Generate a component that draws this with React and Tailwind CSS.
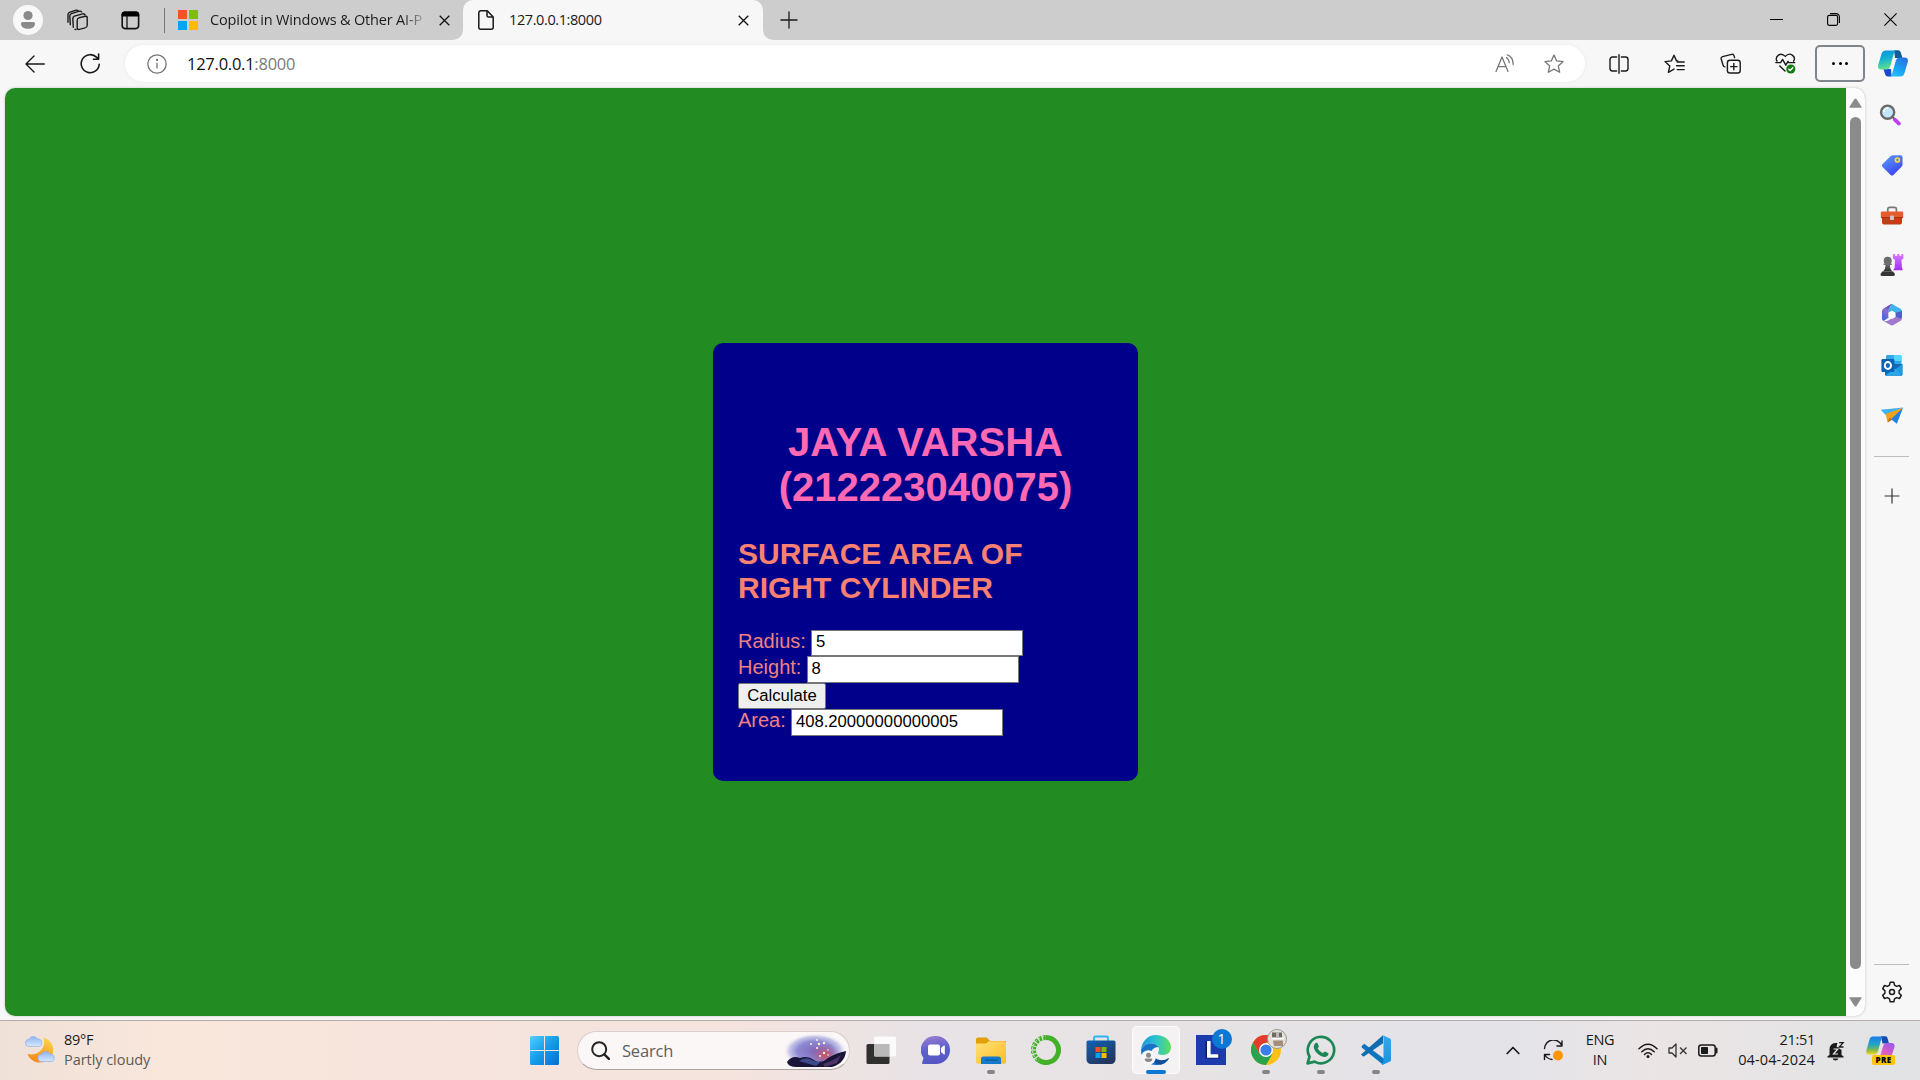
import React from "react";

const UI = "font-['Open_Sans','Noto_Sans',sans-serif]";

function Svg({ w, h, className = "", children, ...rest }) {
  return (
    <svg width={w} height={h} viewBox={`0 0 ${w} ${h}`} fill="none" className={`shrink-0 ${className}`} {...rest}>
      {children}
    </svg>
  );
}

const line = { stroke: "#1a1a1a", strokeWidth: 1.4, strokeLinecap: "round", strokeLinejoin: "round" };

function Defs() {
  return (
    <svg width="0" height="0" className="absolute">
      <defs>
        <linearGradient id="cpA" x1="0" y1="0" x2="0.2" y2="1">
          <stop offset="0" stopColor="#0b8fe0" /><stop offset="0.5" stopColor="#14b3d0" /><stop offset="1" stopColor="#62e08c" />
        </linearGradient>
        <linearGradient id="cpB" x1="0.8" y1="0" x2="0.2" y2="1">
          <stop offset="0" stopColor="#2a6fe0" /><stop offset="0.6" stopColor="#16a5f5" /><stop offset="1" stopColor="#27c3fb" />
        </linearGradient>
        <linearGradient id="ppA" x1="0" y1="0" x2="0" y2="1">
          <stop offset="0" stopColor="#1b7be8" /><stop offset="0.45" stopColor="#21a6c9" /><stop offset="0.75" stopColor="#7fb94c" /><stop offset="1" stopColor="#ffd21c" />
        </linearGradient>
        <linearGradient id="ppB" x1="0.8" y1="0" x2="0.2" y2="1">
          <stop offset="0" stopColor="#9b59e8" /><stop offset="0.5" stopColor="#d85bc9" /><stop offset="1" stopColor="#ff7a6b" />
        </linearGradient>
        <linearGradient id="tag" x1="0" y1="0" x2="0.6" y2="1">
          <stop offset="0" stopColor="#5aa2ff" /><stop offset="1" stopColor="#3d43f0" />
        </linearGradient>
        <linearGradient id="m3a" x1="0.6" y1="0" x2="0.2" y2="1">
          <stop offset="0" stopColor="#4a3fa8" /><stop offset="0.4" stopColor="#8a6fd0" /><stop offset="1" stopColor="#3f63d8" />
        </linearGradient>
        <linearGradient id="rook" x1="0" y1="0" x2="0" y2="1">
          <stop offset="0" stopColor="#d77bff" /><stop offset="1" stopColor="#a32cf5" />
        </linearGradient>
        <linearGradient id="pawn" x1="0" y1="0" x2="0" y2="1">
          <stop offset="0" stopColor="#777" /><stop offset="1" stopColor="#2b2b2b" />
        </linearGradient>
        <linearGradient id="win" x1="0" y1="0" x2="1" y2="1">
          <stop offset="0" stopColor="#4fd0ff" /><stop offset="0.5" stopColor="#159be8" /><stop offset="1" stopColor="#006fd4" />
        </linearGradient>
        <linearGradient id="moon" x1="0.7" y1="0" x2="0.2" y2="1">
          <stop offset="0" stopColor="#fbd24a" /><stop offset="1" stopColor="#f28418" />
        </linearGradient>
        <linearGradient id="cloud" x1="0" y1="0" x2="0" y2="1">
          <stop offset="0" stopColor="#8fb2f2" /><stop offset="1" stopColor="#d6e9fd" />
        </linearGradient>
        <linearGradient id="chat" x1="0.3" y1="0" x2="0.5" y2="1">
          <stop offset="0" stopColor="#9a7bd0" /><stop offset="0.5" stopColor="#5b60cc" /><stop offset="1" stopColor="#5555c4" />
        </linearGradient>
        <linearGradient id="folder" x1="0" y1="0" x2="1" y2="1">
          <stop offset="0" stopColor="#ffe07a" /><stop offset="1" stopColor="#fdbe1e" />
        </linearGradient>
        <linearGradient id="store" x1="0" y1="0" x2="0.6" y2="1">
          <stop offset="0" stopColor="#0f63b4" /><stop offset="1" stopColor="#24365f" />
        </linearGradient>
        <linearGradient id="edgeTop" x1="0" y1="0.5" x2="1" y2="0.5">
          <stop offset="0" stopColor="#1b96dc" /><stop offset="0.5" stopColor="#2cc3d2" /><stop offset="1" stopColor="#5fe05a" />
        </linearGradient>
        <linearGradient id="vs" x1="0" y1="0" x2="0" y2="1">
          <stop offset="0" stopColor="#35a9ee" /><stop offset="1" stopColor="#1c93e0" />
        </linearGradient>
        <radialGradient id="glow" cx="0.5" cy="0.5" r="0.5">
          <stop offset="0" stopColor="#8268b8" /><stop offset="0.55" stopColor="#8c8ad2" /><stop offset="0.8" stopColor="#b9b8e4" stopOpacity="0.8" /><stop offset="1" stopColor="#fbf6f5" stopOpacity="0" />
        </radialGradient>
        <radialGradient id="ember" cx="0.5" cy="0.5" r="0.5">
          <stop offset="0" stopColor="#cf4f62" /><stop offset="1" stopColor="#9a5f9c" stopOpacity="0" />
        </radialGradient>
      </defs>
    </svg>
  );
}

function CloseX({ size = 11, className = "" }) {
  return (
    <Svg w={size} h={size} className={className}>
      <path d={`M.7.7 ${size - 0.7} ${size - 0.7}M${size - 0.7}.7.7 ${size - 0.7}`} stroke="#111" strokeWidth="1.3" />
    </Svg>
  );
}

function TabBar() {
  return (
    <header className={`flex h-10 items-center bg-[#cdcdcd] text-[#1b1b1b] ${UI}`}>
      <Svg w={30} h={30} className="ml-[13px]">
        <circle cx="15" cy="15" r="15" fill="#f8f8f8" />
        <circle cx="15" cy="10.5" r="4.6" fill="#8a8a8a" />
        <path d="M8 18.5a1.6 1.6 0 0 1 1.6-1.6h10.8a1.6 1.6 0 0 1 1.6 1.6c0 3.5-3 5.3-7 5.3s-7-1.8-7-5.3z" fill="#8a8a8a" />
      </Svg>
      <Svg w={22} h={22} className="ml-6" {...line}>
        <rect x="10.2" y="7.8" width="10" height="11.6" rx="2" transform="skewY(-14) translate(0 4)" />
        <path d="M6.3 18.2 5.8 9.6q0-1.8 1.6-2.4l8.3-2.3M3.3 15.6 2.8 7q0-1.8 1.6-2.4l8-2.4q1.5-.4 2.2.8M9 20.5q-.2.1-.9-.2M1 13.2V5.8q0-1.8 1.5-2.4L9 1.2q1.2-.4 2 .6M15.7 4.9q1.7-.4 2.3 1" />
      </Svg>
      <Svg w={19} h={19} className="ml-8">
        <rect x="1.2" y="1.2" width="16.4" height="16.4" rx="3" stroke="#111" strokeWidth="1.6" />
        <path d="M.6 5.4V3.6a3 3 0 0 1 3-3h11.6a3 3 0 0 1 3 3v1.8z" fill="#000" />
        <path d="M6 5v12.5" stroke="#111" strokeWidth="1.3" />
      </Svg>
      <div className="ml-6 h-[25px] w-px bg-[#777]" />
      <div className="ml-[13px] grid h-5 w-5 grid-cols-2 gap-[2px]">
        <i className="bg-[#f35325]" /><i className="bg-[#81bc06]" /><i className="bg-[#05a6f0]" /><i className="bg-[#ffba08]" />
      </div>
      <div className="ml-3 w-[218px] whitespace-nowrap bg-gradient-to-r from-[#1b1b1b] from-88% to-[#cdcdcd] bg-clip-text text-[14.5px] leading-5 tracking-[-0.18px] text-transparent">
        Copilot in Windows &amp; Other AI-P
      </div>
      <CloseX className="ml-[11px] mt-px" />
      <div className="ml-[3px] flex h-10 w-[320px] items-center">
        <Svg w={10} h={40}><path d="M0 40h10V30A10 10 0 0 1 0 40z" fill="#f7f7f7" /></Svg>
        <div className="flex h-10 w-[300px] items-center rounded-t-[10px] bg-[#f7f7f7]">
          <Svg w={16} h={20} className="ml-[15px]" stroke="#1a1a1a" strokeWidth="1.5" strokeLinejoin="round">
            <path d="M3 .8h6.3L15.2 7v10.2a2 2 0 0 1-2 2H2.8a2 2 0 0 1-2-2V2.8a2 2 0 0 1 2-2z" /><path d="M9 1v4.4q0 1.6 1.6 1.6H15" />
          </Svg>
          <span className="ml-[15px] w-[94px] whitespace-nowrap text-[14.5px] leading-5 tracking-[-0.4px]">127.0.0.1:8000</span>
          <CloseX className="ml-[135px] mt-px" />
        </div>
        <Svg w={10} h={40}><path d="M10 40H0V30a10 10 0 0 0 10 10z" fill="#f7f7f7" /></Svg>
      </div>
      <Svg w={18} h={18} className="ml-[7px] mb-px" stroke="#1a1a1a" strokeWidth="1.3"><path d="M9 .5v17M.5 9h17" /></Svg>
      <div className="mb-px ml-auto flex items-center gap-[44px] pr-[23px]">
        <Svg w={13} h={13}><path d="M0 6.5h13" stroke="#000" /></Svg>
        <Svg w={13} h={13} stroke="#000" strokeWidth="1.1">
          <rect x=".6" y="2.4" width="10" height="10" rx="1.6" /><path d="M3 .6h6.2a3.2 3.2 0 0 1 3.2 3.2V10" />
        </Svg>
        <Svg w={13} h={13}><path d="m.4.4 12.2 12.2M12.6.4.4 12.6" stroke="#000" strokeWidth="1.1" /></Svg>
      </div>
    </header>
  );
}

function Toolbar() {
  return (
    <div className={`flex h-[47px] items-center bg-[#f7f7f7] ${UI}`}>
      <Svg w={20} h={18} className="ml-[25px]" {...line}><path d="M19.3 9H1M9 1 1 9l8 8" /></Svg>
      <Svg w={21} h={21} className="ml-[35px]" {...line} strokeWidth="1.6"><path d="M19.2 11.2A9 9 0 1 1 16.7 4.4l1.5 1.6M18.6 1v5.2h-5.2" /></Svg>
      <div className="ml-6 flex h-[37px] w-[1460px] items-center rounded-full bg-white shadow-[0_0_4px_rgba(0,0,0,0.06)]">
        <Svg w={20} h={20} className="ml-[22px]" stroke="#767676" strokeWidth="1.3"><circle cx="10" cy="10" r="9.2" /><path d="M10 8.8v5.6" /><circle cx="10" cy="6" r=".5" fill="#767676" /></Svg>
        <span className="ml-5 whitespace-nowrap text-[16.5px] leading-6 tracking-[-0.25px] text-[#111]">127.0.0.1<span className="text-[#7b7b7b]">:8000</span></span>
        <Svg w={20} h={19} className="ml-auto mr-[29px]" stroke="#767676" strokeWidth="1.3" strokeLinecap="round" strokeLinejoin="round">
          <path d="M1 17.5 7 3l6 14.5M3 12.6h8" /><path d="M11.5 3.6q2.6 1.6 2.8 5M12.4.9q5.7 2 5.8 9.6" />
        </Svg>
        <Svg w={20} h={20} className="mr-[21px]" stroke="#767676" strokeWidth="1.3" strokeLinejoin="round">
          <path d="m10 1 2.7 5.9 6.4.7-4.8 4.3 1.4 6.4L10 15.1l-5.7 3.2 1.4-6.4L.9 7.6l6.4-.7z" />
        </Svg>
      </div>
      <Svg w={20} h={20} className="ml-6" {...line}><path d="M7.6 3H3.4A2.4 2.4 0 0 0 1 5.4v9.2A2.4 2.4 0 0 0 3.4 17h4.2M12.4 3h4.2A2.4 2.4 0 0 1 19 5.4v9.2a2.4 2.4 0 0 1-2.4 2.4h-4.2M10 .8v18.4" /></Svg>
      <Svg w={21} h={20} className="ml-[35px]" {...line}>
        <path d="M13.8 7 12.5 6.9 10 1.2 7.4 6.9 1 7.6l4.8 4.3-1.4 6.4 5.6-3.2M13.2 8h7M12.6 11.8h7.6M13.2 15.6h7" />
      </Svg>
      <Svg w={21} h={21} className="ml-[35px]" {...line}>
        <rect x="7.4" y="7.2" width="12.8" height="12.8" rx="2.6" /><path d="M13.8 10.4v6.4M10.6 13.6H17M14.6 4.6l-.6-2q-.6-1.8-2.4-1.3L2.6 3.6Q.7 4.2 1.2 6l2 6.6q.5 1.4 1.7 1.3" />
      </Svg>
      <Svg w={21} h={21} className="ml-[34px]" {...line}>
        <path d="M2 8.2C-.5 3.6 5.5-1.8 10.3 3.4 15-1.8 21.4 3.6 18.6 8.2M.8 9.6h4.8l2-3.2 3.2 5.8 2.2-3.8.8 1.2h6M4.8 13l5.2 5" />
        <circle cx="15.8" cy="16" r="4.6" fill="#107c10" stroke="none" /><path d="m13.8 16.2 1.4 1.3 2.6-2.7" stroke="#fff" />
      </Svg>
      <div className="ml-[19px] flex h-[37px] w-[50px] items-center justify-center gap-[3.5px] rounded-[5px] border-2 border-[#80858d]">
        <i className="h-[3px] w-[3px] rounded-full bg-black" /><i className="h-[3px] w-[3px] rounded-full bg-black" /><i className="h-[3px] w-[3px] rounded-full bg-black" />
      </div>
      <Svg w={30} h={27} className="ml-[13px]">
        <path d="M16 .3h4.3q1.8 0 2.4 2L24.5 8H17z" fill="#155d95" />
        <path d="M13.6 26.5H9.8q-2 0-2.6-2L5.4 19H13z" fill="#1d48d0" />
        <path d="M7.6.4h11.2q-2.2.4-2.9 2.8L12.3 16q-1 3.6-4.2 3.6H3.6Q-.7 19.6.2 15L3.6 3.6Q4.6.4 7.6.4z" fill="url(#cpA)" />
        <path d="M22.4 26.5H11.2q2.2-.4 2.9-2.8L17.7 11q1-3.6 4.2-3.6h4.5q4.3 0 3.4 4.6l-3.4 11.3q-1 3.2-4 3.2z" fill="url(#cpB)" />
      </Svg>
    </div>
  );
}

function Slot({ children, className = "h-[50px]" }) {
  return <div className={`flex w-full shrink-0 items-center justify-center ${className}`}>{children}</div>;
}

function Sidebar() {
  return (
    <aside className="flex w-[55px] flex-col items-center pr-[2px] pt-[2px]">
      <Slot>
        <Svg w={22} h={22} className="mr-[3px]"><path d="m13.5 13 2.5 2.4" stroke="#555" strokeWidth="2" /><path d="m15.8 15.6 4.2 4" stroke="#c13cf0" strokeWidth="3.6" strokeLinecap="round" /><circle cx="8.6" cy="8.2" r="6.6" fill="#c4e6fb" stroke="#6a6a6a" strokeWidth="2.4" /><path d="M5 8a4 4 0 0 1 4-4" stroke="#fff" strokeWidth="1.4" /></Svg>
      </Slot>
      <Slot>
        <Svg w={22} h={22}><path d="M11.5 1.2h8a2 2 0 0 1 2 2v7.6q0 1-.7 1.7l-8.4 8.4q-1.4 1.3-2.8 0l-8-8q-1.4-1.4 0-2.8L10 1.8q.7-.6 1.5-.6z" fill="url(#tag)" /><circle cx="16.4" cy="6" r="2" fill="#5f7df2" stroke="#f8d83c" strokeWidth="1.7" /></Svg>
      </Slot>
      <Slot className="h-[50px] pt-[2px]">
        <Svg w={24} h={20}><path d="M7.8 6V3.3a2 2 0 0 1 2-2h4.6a2 2 0 0 1 2 2V6" stroke="#777" strokeWidth="1.7" /><path d="M2 9h20v7.4a2 2 0 0 1-2 2H4a2 2 0 0 1-2-2z" fill="#c63c16" /><rect x=".8" y="5.4" width="22.4" height="6.4" rx="1.4" fill="#e75c2c" /><path d="M1 11.6h22" stroke="#a9300f" /><rect x="10" y="9.4" width="4" height="4.6" rx="1" fill="#c9c9c9" /></Svg>
      </Slot>
      <Slot>
        <Svg w={24} h={24}>
          <path d="M13 1h2v1.8h2.200V1h2.200v1.800h2V1h2v4.400l-2 1.600.6 8 1 2.200H13l1.600-2.200.4-8-2-1.600z" fill="url(#rook)" />
          <circle cx="7.700" cy="7.800" r="4" fill="#6b6b6b" />
          <path d="M3.400 11.200q0-.8.800-.8h7q.8 0 .8.800t-.8.800h-1.300q0 4.500 2.900 6.600H2.600q2.900-2.100 2.900-6.600H4.200q-.8 0-.8-.800z" fill="url(#pawn)" />
          <path d="M2.400 18.400h10.600l1.800 2.400q.5 2.200-1.200 2.200H1.800Q.1 23 .6 20.800z" fill="#353535" />
        </Svg>
      </Slot>
      <Slot>
        <Svg w={22} h={24}>
          <path d="M11 1 19.500 5.800Q21 6.700 21 8.500v6.400l-6.600-3.500V9.700L11 7.800 7.700 9.600V6z" fill="#3fb4ec" />
          <path d="M11.500 1Q10.400.8 9.400 1.500L2.500 5.500Q1 6.500 1 8.300v7.200q0 1.700 1.500 2.600l5.200-3.500V6.500Q8.500 2.500 11.500 1z" fill="url(#m3a)" />
          <path d="M2 17.800q3 1 5.700-.6l6.700-4V9.500L21 13v2.200q0 1.700-1.400 2.600L12.500 22q-1.500.9-3 0z" fill="#a178cc" />
          <path d="M14.400 9.700 21 8v5.500q0 2.500-3 1.500l-3.600-1.500z" fill="#4d62c4" />
          <path d="m11 8 3.500 2v4L11 16l-3.500-2v-4z" fill="#fff" />
        </Svg>
      </Slot>
      <Slot>
        <Svg w={22} h={22}><rect x="5" y="1" width="15.5" height="12" rx="1.4" fill="#2fa7e9" /><path d="M12.8 1h6.3a1.4 1.4 0 0 1 1.400 1.400V7h-7.700z" fill="#50d9ff" /><path d="M4 10h17.400v10.400a1.300 1.300 0 0 1-1.300 1.300H5.300A1.300 1.300 0 0 1 4 20.400z" fill="#0f6cbd" /><path d="m21.400 10-8 6 8 5z" fill="#1f9be0" /><path d="M4.400 21.400 14 14.600l7 6.800z" fill="#28a8ea" /><rect x=".4" y="5" width="13" height="13" rx="1.300" fill="#0a64b5" /><ellipse cx="6.900" cy="11.500" rx="3.100" ry="3.400" stroke="#fff" strokeWidth="2" /></Svg>
      </Slot>
      <Slot className="h-[50px] pt-[2px]">
        <Svg w={24} h={18}><path d="M.6 2.800 23.200.6 7 9.200z" fill="#3cb4f4" /><path d="M23.200.6 16.800 16.800 9.600 11z" fill="#1f7fe4" /><path d="M23.200.6 5.600 7 7.600 15.400z" fill="#f3a01c" /><path d="m7.600 15.400 2-4.600 2.600 2z" fill="#b56c08" /></Svg>
      </Slot>
      <div className="mt-[16px] h-px w-[35px] bg-[#bdbdbd]" />
      <Svg w={16} h={16} className="mt-[31px]" stroke="#333" strokeWidth="1.2"><path d="M8 .5v15M.5 8h15" /></Svg>
      <div className="mt-auto h-px w-[35px] bg-[#bdbdbd]" />
      <Svg w={22} h={22} className="mb-[17px] mt-[16px]" stroke="#1a1a1a" strokeWidth="1.5" strokeLinejoin="round">
        <path d="M9.200 1.200h3.600l.7 3 2 1.200 3-.9 1.800 3.100-2.200 2.200v2.400l2.200 2.200-1.800 3.100-3-.9-2 1.200-.7 3H9.200l-.7-3-2-1.200-3 .9-1.800-3.100 2.200-2.200V9.800L1.700 7.600l1.800-3.100 3 .9 2-1.200z" /><circle cx="11" cy="11" r="2.500" />
      </Svg>
    </aside>
  );
}

function Field({ label, value, tall }) {
  return (
    <label className={`flex items-start ${tall ? "h-[27px]" : "h-[26px]"}`}>
      <span className="whitespace-pre leading-[23px]">{label} </span>
      <input
        readOnly
        value={value}
        className="h-full w-[212px] rounded-none border border-[#767676] bg-white pb-[2px] pl-[3.5px] pr-0 pt-0 text-[16.67px] leading-5 text-black"
      />
    </label>
  );
}

function Page() {
  return (
    <main className="flex flex-1 items-center justify-center bg-[#228b22] font-['Liberation_Sans',Arial,sans-serif]">
      <section className="mt-[20px] h-[438px] w-[425px] rounded-[10px] bg-[#00008b] px-[25px] pt-[77px] text-[20px] text-[#f08080]">
        <h1 className="text-center text-[40px] font-bold leading-[45px] text-[#ff69b4]">JAYA VARSHA (212223040075)</h1>
        <h2 className="mt-[27px] w-[320px] text-[30px] font-bold leading-[34px] text-[#fa8072]">SURFACE AREA OF RIGHT CYLINDER</h2>
        <div className="mt-[25px] flex flex-col items-start">
          <Field label="Radius:" value="5" />
          <Field label="Height:" value="8" tall />
          <button className="h-[26px] w-[88px] rounded-[2px] border border-[#767676] bg-[#efefef] pb-px text-[16.67px] leading-5 text-black">Calculate</button>
          <Field label="Area:" value="408.20000000000005" tall />
        </div>
      </section>
    </main>
  );
}

function Scrollbar() {
  return (
    <div className="flex w-[19px] flex-col items-center rounded-r-[10px] bg-[#fcfcfc] py-[10px] shadow-[1px_0_2px_rgba(0,0,0,0.15)]">
      <Svg w={13} h={10}><path d="M6.5.5q.6 0 1 .6L12.6 9q.2.7-.5.7H.9Q.2 9.700.4 9L5.500 1.100q.4-.6 1-.6z" fill="#8b8b8b" /></Svg>
      <div className="mt-[9px] h-[852px] w-[11px] rounded-full bg-[#8b8b8b]" />
      <Svg w={13} h={10} className="mt-auto mb-[-1px]"><path d="M6.500 9.500q.6 0 1-.6L12.600 1q.2-.7-.5-.7H.9Q.2.3.4 1l5.100 7.900q.4.6 1 .6z" fill="#8b8b8b" /></Svg>
    </div>
  );
}

function TaskItem({ children, running }) {
  return (
    <div className="flex h-full w-[55px] shrink-0 flex-col items-center pt-[5px]">
      <div className="flex h-12 w-12 items-center justify-center">{children}</div>
      {running && <i className="-mt-[4px] h-[4px] w-2 rounded-full bg-[#858585]" />}
    </div>
  );
}

function TaskIcons() {
  return (
    <>
      <TaskItem>
        <Svg w={30} h={30}><rect x=".5" y="9" width="23" height="20" rx="1.500" fill="#30302f" /><rect x="8" y="1.500" width="22" height="20" rx="1.500" fill="#fff" fillOpacity=".85" /><path d="M8 9h15.500v12.500H9.500A1.500 1.500 0 0 1 8 20z" fill="#b9b9b9" /></Svg>
      </TaskItem>
      <TaskItem>
        <Svg w={30} h={30}><path d="M15 1a14 14 0 1 1 0 28H1.800q-1.200-.2-.6-1.400l1.300-4.500A14 14 0 0 1 15 1z" fill="url(#chat)" /><rect x="7" y="9.500" width="12" height="11" rx="2" fill="#fff" /><path d="m20 13 3-2.500q.8-.4.800.500v8q0 .9-.8.500L20 17z" fill="#fff" /></Svg>
      </TaskItem>
      <TaskItem running>
        <Svg w={30} h={28}><path d="M0 3.500Q0 1.500 2 1.500h8q1 0 1.600.7L14 5H30v6H0z" fill="#e0a008" /><path d="M0 8.500q0-1 1-1h9l2.500-2.300H28a2 2 0 0 1 2 2V26a1.800 1.800 0 0 1-1.800 1.800H1.800A1.800 1.800 0 0 1 0 26z" fill="url(#folder)" /><path d="M5 28v-5a2.500 2.500 0 0 1 2.500-2.500h15A2.500 2.500 0 0 1 25 23v5z" fill="#1579cc" /><path d="M9 24h12.500" stroke="#07569e" strokeWidth="1.200" /></Svg>
      </TaskItem>
      <TaskItem>
        <Svg w={30} h={30}><path d="M15 2.500a12.500 12.500 0 1 1-7.500 22.500" stroke="#43b02a" strokeWidth="5" /><path d="M7.500 25A12.500 12.500 0 0 1 15 2.500" stroke="#43b02a" strokeWidth="5" strokeDasharray="2.800 1.200" /><path d="M6 25A13.500 13.500 0 0 1 14 1.500M9 22A10.500 10.500 0 0 1 13 5" stroke="#e8e3e4" strokeWidth="1" strokeDasharray="2 2" /></Svg>
      </TaskItem>
      <TaskItem>
        <Svg w={30} h={30}><path d="M8 7V3q0-1.500 1.500-1.500h11Q22 1.500 22 3v4" stroke="#29b6f2" strokeWidth="1.800" /><path d="M.5 7q0-1.500 1.500-1.500h26q1.500 0 1.500 1.500v17.500a4.500 4.500 0 0 1-4.500 4.500H5a4.500 4.500 0 0 1-4.500-4.500z" fill="url(#store)" /><path d="M9.500 12H14.500V17h-5z" fill="#f25022" /><path d="M15.500 12h5v5h-5z" fill="#7fba00" /><path d="M9.500 18h5v5h-5z" fill="#00a4ef" /><path d="M15.500 18h5v5h-5z" fill="#ffb900" /></Svg>
      </TaskItem>
      <div className="flex h-full w-[55px] shrink-0 flex-col items-center pt-[5px]">
        <div className="flex h-12 w-12 flex-col items-center rounded-[5px] border border-white/70 bg-[#f4f2f3] pt-[8px]">
          <Svg w={30} h={30}>
            <path d="M0 15C1 6 7 0 15 0s15 5.500 15 12c0 5-3.500 8-8 8-3 0-5-.8-5-2s1-1.500 1-3.500C18 11 14.500 8.500 10.500 8.500 5 8.500 1 11.500 0 15z" fill="url(#edgeTop)" />
            <path d="M0 15c1.500-4 5.500-6.500 10.500-6.500 3 0 5.500 1.500 6.800 3.500C13 12 10 15 10 19c0 5 4 10.500 10 10.500-2 .5-3.500.5-5 .5C7 30 0 24 0 15z" fill="#1673c8" />
            <path d="M11 16c-.8 6 5 9.200 9.600 9.200 3 0 5-1 6.400-2 .6-.3 1 .2.7.700C25.500 27.500 21.500 30 18 29.600 12 29 9 22 11 16z" fill="#0f4f9c" />
            <circle cx="7.500" cy="22.500" r="7.300" fill="#f7f7f7" /><circle cx="7.500" cy="20.300" r="2.500" fill="#8a8a8a" /><path d="M3.800 24.300q0-.8.800-.8h5.800q.8 0 .8.800 0 2.600-3.700 2.600t-3.700-2.600z" fill="#8a8a8a" />
          </Svg>
          <i className="mt-[5px] h-[4px] w-5 shrink-0 rounded-full bg-[#0a78d4]" />
        </div>
      </div>
      <TaskItem>
        <div className={`relative flex h-[30px] w-[30px] items-center justify-center bg-[#1d3aae] ${UI}`}>
          <Svg w={30} h={30}><path d="M11 6v16H22v-3" stroke="#0c1c66" strokeWidth="3" /><path d="M12.800 6v15h9.500" stroke="#fff" strokeWidth="3.600" /></Svg>
          <span className="absolute -right-[6px] -top-[6px] flex h-5 w-5 items-center justify-center rounded-full bg-[#0a78d4] text-[14px] leading-none text-white">1</span>
        </div>
      </TaskItem>
      <TaskItem running>
        <div className="relative">
          <Svg w={30} h={30}>
            <circle cx="15" cy="15" r="15" fill="#fbc116" />
            <path d="M2 7.500A15 15 0 0 0 15 30l6.500-11.200L15 15 8.500 18.800z" fill="#2ba24c" />
            <path d="M2 7.500A15 15 0 0 1 28 7.500H15L8.500 18.800z" fill="#e33b2e" />
            <circle cx="15" cy="15" r="7" fill="#fff" /><circle cx="15" cy="15" r="5.600" fill="#3b7de9" />
          </Svg>
          <Svg w={20} h={20} className="absolute -right-[6px] -top-[6px]">
            <circle cx="10" cy="10" r="9.500" fill="#e5dfd8" stroke="#9a9a9a" /><path d="M5 3.500h10v5H5z" fill="#6c6d62" /><path d="M9 3h3v5H9z" fill="#bdb6b5" /><path d="M6 11.500h10V17H7z" fill="#a38d7d" /><path d="M5 9.500h12" stroke="#fff" strokeWidth="1.500" />
          </Svg>
        </div>
      </TaskItem>
      <TaskItem running>
        <Svg w={30} h={30}><path d="M1.600 28.400l1.900-6.800A13.200 13.200 0 1 1 8.600 26.600z" stroke="#1b8755" strokeWidth="2.700" strokeLinejoin="round" /><path d="M9 8.500q1-1 2.300-.7l1.600 3.400q-.1 1-1.300 2.100 1.800 3.600 5.400 5 .9-1.500 2-1.800l3.400 1.700q.4 1.300-.8 2.500-2.200 2-5.600.9Q10 19 8 13.500 7.300 10.500 9 8.500z" fill="#1b8755" /></Svg>
      </TaskItem>
      <TaskItem running>
        <Svg w={30} h={30}><path d="M3.200 8.800 24 24.500 22 29.700 1 12.800q-1-1 0-2z" fill="#0b75bd" /><path d="M0 19.500 22 .3v8L3.200 21.200q-.9.500-1.700-.2z" fill="#0f6cb0" /><path d="M22 .3 29 3.500q1 .5 1 1.600v19.800q0 1.100-1 1.600l-7 3.200q-1 .3-1.500-.7L22.500 27V3z" fill="url(#vs)" /></Svg>
      </TaskItem>
    </>
  );
}

function CloudShape({ x, y }) {
  return <path transform={`translate(${x} ${y})`} d="M4 10.500a3.600 3.600 0 0 1 0-7.200A4.700 4.700 0 0 1 12.500 3a3.800 3.800 0 0 1 1.200 7.500z" fill="url(#cloud)" stroke="#86a9ea" strokeWidth=".6" />;
}

function Taskbar() {
  return (
    <footer className={`flex h-[60px] items-center border-t border-[#b3acab] bg-[linear-gradient(90deg,#efe1d8_0%,#f9e7dc_9%,#f5e3de_30%,#f5e3de_38%,#e8e3e6_48%,#e7e3e4_60%,#e3e3e8_78%,#ebe5e5_86%,#e1e3e5_100%)] text-[#1a1a1a] ${UI}`}>
      <div className="flex h-full w-[505px] shrink-0 items-center pb-[2px] pl-[25px]">
        <Svg w={30} h={30}>
          <path d="M18.500 2.500C29 6 31 17 24.500 23.500 17 30.500 6 28 2.500 19 12 21.500 22 14 18.500 2.500z" fill="url(#moon)" />
          <CloudShape x={0} y={1} /><CloudShape x={12.500} y={16} />
        </Svg>
        <div className="ml-[9px] whitespace-nowrap text-[14.500px] leading-5">
          <div className="tracking-[-0.300px]">89°F</div>
          <div className="tracking-[-0.050px] text-[#5f5957]">Partly cloudy</div>
        </div>
      </div>
      <Svg w={29} h={29} className="ml-[25px]">
        <path d="M1.500 0H14v14H0V1.500A1.500 1.500 0 0 1 1.500 0zM15 0h12.500A1.500 1.500 0 0 1 29 1.500V14H15zM0 15h14v14H1.500A1.500 1.500 0 0 1 0 27.500zM15 15h14v12.500a1.500 1.500 0 0 1-1.500 1.500H15z" fill="url(#win)" />
      </Svg>
      <div className="ml-[18px] flex h-[39px] w-[273px] shrink-0 items-center overflow-hidden rounded-full border border-[#d8cfcd] border-b-[#aaa3a2] bg-[#fbf7f6]">
        <Svg w={19} h={19} className="ml-[13px]" stroke="#242424"><circle cx="8.200" cy="8.200" r="7" strokeWidth="2" /><path d="m13.300 13.300 4.600 4.600" strokeWidth="2.400" strokeLinecap="round" /></Svg>
        <span className="ml-3 text-[16.500px] leading-5 tracking-[-0.200px] text-[#5f5f5f]">Search</span>
        <Svg w={64} h={35} className="ml-auto mr-[2px]">
          <ellipse cx="32" cy="18" rx="32" ry="18" fill="url(#glow)" />
          <ellipse cx="42" cy="22" rx="15" ry="12" fill="url(#ember)" />
          <path d="M4 29q5-7 13-4 8-3 14 2t14-2q8-5 18-7-1 12-14 16H14Q5 34 4 29z" fill="#1a1438" />
          <path d="M16 28q7-5 13-1t12-1l-8 7z" fill="#3c4a8c" /><path d="M40 31q10-3 18-9l-4 8-12 4z" fill="#4a3566" />
          <g fill="#fff3d0"><circle cx="28" cy="11" r="1" /><circle cx="34" cy="7" r="1" /><circle cx="36" cy="11" r="1.200" /><circle cx="41" cy="10" r="1.200" /><circle cx="34" cy="15" r="1" /><circle cx="41" cy="20" r="1.200" /><circle cx="37" cy="23" r="1" /><circle cx="45" cy="17" r=".8" /><circle cx="45" cy="22" r=".8" /></g>
        </Svg>
      </div>
      <div className="ml-[3px] flex h-full"><TaskIcons /></div>
      <Svg w={14} h={9} className="ml-auto" {...line} strokeWidth="1.700"><path d="M1.200 7.500 7 1.500l5.800 6" /></Svg>
      <Svg w={21} h={21} className="ml-[23px]" {...line}>
        <path d="M1.500 8.500A9 9 0 0 1 18.800 5.500M19 1v5h-5M1.500 19.500v-5h5M2 15q2.500 4 7 4.500" /><circle cx="15" cy="15.500" r="5" fill="#ff9500" stroke="none" />
      </Svg>
      <div className="mb-px ml-[18px] w-[36px] text-center text-[14.500px] leading-5 tracking-[-0.300px]">ENG<br />IN</div>
      <Svg w={20} h={16} className="ml-[20px]" stroke="#1a1a1a" strokeWidth="1.500" strokeLinecap="round"><path d="M1 5.800q9-9 18 0M3.800 8.800q6.200-6.200 12.400 0M6.500 11.500q3.500-3.400 7 0" /><circle cx="10" cy="13.400" r="1.500" fill="#1a1a1a" stroke="none" /></Svg>
      <Svg w={20} h={15} className="ml-[10px]" stroke="#333" strokeWidth="1.300" strokeLinejoin="round"><path d="M1 5h3l4-4v13l-4-4H1zM12 4.500l6.500 6.500M18.500 4.500 12 11" /></Svg>
      <Svg w={20} h={13} className="ml-[10px]"><rect x=".8" y="1" width="16.400" height="11" rx="2.500" stroke="#1a1a1a" strokeWidth="1.500" /><rect x="3" y="3" width="7" height="7" rx=".8" fill="#1a1a1a" /><path d="M18.500 4.500v4" stroke="#1a1a1a" strokeWidth="2" strokeLinecap="round" /></Svg>
      <div className="mb-[2px] ml-[16px] flex w-[81px] flex-col items-end whitespace-nowrap text-[14.500px] leading-5"><div className="tracking-[-0.300px]">21:51</div><div className="tracking-[0.120px]">04-04-2024</div></div>
      <Svg w={18} h={20} className="ml-[12px]">
        <path d="M2.500 14V8.500q0-6 6-6.500h2L9.500 5.500 14.500 9v5l2 1.300v1.200H.5v-1.200z" fill="#1a1a1a" />
        <path d="M5.500 17.500h6q-.7 2-3 2t-3-2z" fill="#1a1a1a" />
        <path d="M6.500 8h4.300l-4.300 5h4.500" stroke="#e6e6e6" strokeWidth="1.200" /><path d="M12.200 1.600h4L12.200 6h4.300" stroke="#1a1a1a" strokeWidth="1.300" />
      </Svg>
      <div className="relative ml-[21px] mr-[25px] h-[29px] w-[29px]">
        <Svg w={29} h={26}>
          <path d="M15 .3h4.500q1.500.1 2 1.700L23 7.500h-6.500z" fill="#1748b8" />
          <path d="M7 .4h11q-2 .4-2.700 2.600L12 15q-1 3.500-4 3.500H3Q-.4 18.500.3 14.500L3.500 3.500Q4.300.4 7 .4z" fill="url(#ppA)" />
          <path d="M20.500 24.500H11q2-.3 2.600-2.500L17 10.500q1-3.500 4-3.500h4.500q3.500 0 3 4L25 21.500q-1 3-4.500 3z" fill="url(#ppB)" />
        </Svg>
        <span className="absolute bottom-0 left-[6px] flex h-[10px] w-[23px] items-center justify-center rounded-[2px] bg-[#ffc60a] text-[8px] font-extrabold leading-none tracking-[0.300px] text-black">PRE</span>
      </div>
    </footer>
  );
}

export default function App() {
  return (
    <div className="flex h-[1080px] w-[1920px] flex-col overflow-hidden bg-[#f7f7f7]">
      <Defs />
      <TabBar />
      <Toolbar />
      <div className="flex h-[933px] shrink-0 pt-px">
        <div className="mb-[4px] ml-[5px] flex flex-1 overflow-hidden rounded-[10px] shadow-[0_0_3px_rgba(0,0,0,0.2)]">
          <Page />
          <Scrollbar />
        </div>
        <Sidebar />
      </div>
      <Taskbar />
    </div>
  );
}
